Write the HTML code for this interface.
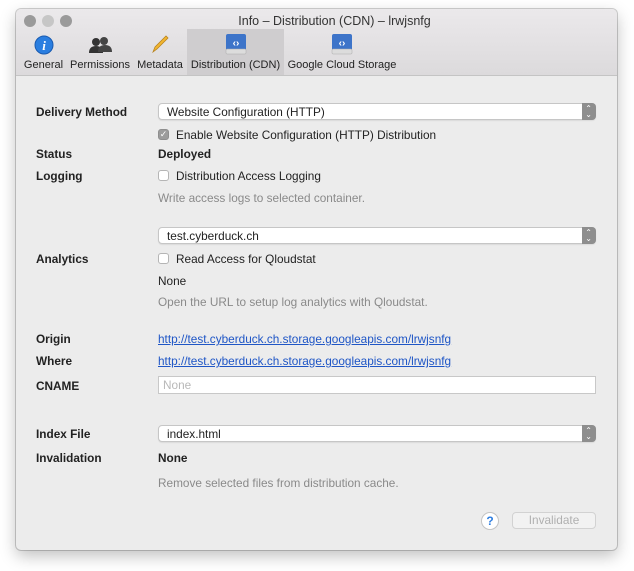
<!DOCTYPE html>
<html><head><style>
body{margin:0;width:634px;height:571px;background:#fff;font-family:"Liberation Sans",sans-serif;font-size:11.8px;color:#222;position:relative;overflow:hidden}
.win{position:absolute;left:16px;top:9px;width:601px;height:541px;background:#ececec;border-radius:5px;box-shadow:0 0 0 1px rgba(0,0,0,.18),0 6px 16px rgba(0,0,0,.25);overflow:hidden}
.bar{position:absolute;left:0;top:0;width:601px;height:66px;background:linear-gradient(#ebe9eb,#dcdadc);border-bottom:1px solid #c4c4c4}
.dot{position:absolute;top:6px;width:12px;height:12px;border-radius:50%;background:#9a9a9a}
.title{position:absolute;top:5px;left:0;width:601px;text-align:center;font-size:12.5px;color:#333;padding-left:36px;box-sizing:border-box}
.tab{position:absolute;top:20px;height:46px;text-align:center;font-size:11px;color:#222}
.tab .lab{position:absolute;bottom:4px;left:0;right:0;white-space:nowrap}
.sel{background:#cfcdcf}
.a{position:absolute;white-space:nowrap}
.b{font-weight:bold}
.pop{position:absolute;left:142px;width:438px;height:17px;background:#fff;border:1px solid #c6c6c6;border-radius:4px;box-sizing:border-box;padding-left:8px;line-height:16px;box-shadow:0 1px 1px rgba(0,0,0,.08)}
.pop:after{content:"";position:absolute;right:-1px;top:-1px;width:14px;height:17px;background:#8e8e8e;border-radius:0 4px 4px 0}
.pop i{position:absolute;right:3px;top:2px;color:#fff;font-style:normal;font-size:8px;line-height:6px;z-index:2;text-align:center}
.cb{position:absolute;width:11px;height:11px;border:1px solid #b5b5b5;border-radius:3px;background:#fff;box-sizing:border-box}
.g{color:#8a8a8a}
a{color:#1f56c6;text-decoration:underline}
</style></head><body>
<div class="win">
<div class="bar">
<div class="dot" style="left:8px"></div><div class="dot" style="left:26px;background:#c6c6c6"></div><div class="dot" style="left:44px"></div>
<div class="title">Info – Distribution (CDN) – lrwjsnfg</div>
<div class="tab" style="left:6px;width:43px"><svg class="a" style="left:12px;top:6px" width="20" height="20"><circle cx="10" cy="10" r="9" fill="#2a7ee0" stroke="#1a5bb0"/><text x="10" y="15" font-family="Liberation Serif" font-style="italic" font-weight="bold" font-size="13" fill="#fff" text-anchor="middle">i</text></svg><div class="lab">General</div></div>
<div class="tab" style="left:53px;width:62px"><svg class="a" style="left:19px;top:7px" width="24" height="18"><circle cx="8" cy="6" r="4" fill="#333"/><path d="M1 17 q0-7 7-7 q7 0 7 7z" fill="#333"/><circle cx="16" cy="5" r="4" fill="#444"/><path d="M10 16 q0-7 7-7 q7 0 7 7z" fill="#444"/></svg><div class="lab">Permissions</div></div>
<div class="tab" style="left:120px;width:48px"><svg class="a" style="left:14px;top:5px" width="20" height="20"><path d="M3 18 L5 13 L16 2 L18 4 L7 15 Z" fill="#f2b630" stroke="#b88420" stroke-width=".8"/></svg><div class="lab">Metadata</div></div>
<div class="tab sel" style="left:171px;width:97px"><svg class="a" style="left:38px;top:4px" width="22" height="22"><rect x="1" y="1" width="20" height="17" rx="2" fill="#3d74c9"/><rect x="1" y="16" width="20" height="5" rx="1" fill="#dcdcdc" stroke="#aaa" stroke-width=".5"/><text x="11" y="13" font-size="10" fill="#fff" text-anchor="middle" font-weight="bold">‹›</text></svg><div class="lab">Distribution (CDN)</div></div>
<div class="tab" style="left:271px;width:110px"><svg class="a" style="left:44px;top:4px" width="22" height="22"><rect x="1" y="1" width="20" height="17" rx="2" fill="#3d74c9"/><rect x="1" y="16" width="20" height="5" rx="1" fill="#dcdcdc" stroke="#aaa" stroke-width=".5"/><text x="11" y="13" font-size="10" fill="#fff" text-anchor="middle" font-weight="bold">‹›</text></svg><div class="lab">Google Cloud Storage</div></div>
</div>

<div class="a b" style="left:20px;top:96px">Delivery Method</div>
<div class="pop" style="top:94px">Website Configuration (HTTP)<i>⌃<br>⌄</i></div>
<div class="cb" style="left:142px;top:120px;background:#9c9c9c;border-color:#8e8e8e;color:#fff;font-size:9px;line-height:9px;text-align:center">✓</div>
<div class="a" style="left:160px;top:119px">Enable Website Configuration (HTTP) Distribution</div>
<div class="a b" style="left:20px;top:138px">Status</div><div class="a b" style="left:142px;top:138px">Deployed</div>
<div class="a b" style="left:20px;top:160px">Logging</div>
<div class="cb" style="left:142px;top:161px"></div><div class="a" style="left:160px;top:160px">Distribution Access Logging</div>
<div class="a g" style="left:142px;top:182px">Write access logs to selected container.</div>
<div class="pop" style="top:218px">test.cyberduck.ch<i>⌃<br>⌄</i></div>
<div class="a b" style="left:20px;top:243px">Analytics</div>
<div class="cb" style="left:142px;top:244px"></div><div class="a" style="left:160px;top:243px">Read Access for Qloudstat</div>
<div class="a" style="left:142px;top:265px">None</div>
<div class="a g" style="left:142px;top:286px">Open the URL to setup log analytics with Qloudstat.</div>
<div class="a b" style="left:20px;top:323px">Origin</div><div class="a" style="left:142px;top:323px"><a>http://test.cyberduck.ch.storage.googleapis.com/lrwjsnfg</a></div>
<div class="a b" style="left:20px;top:345px">Where</div><div class="a" style="left:142px;top:345px"><a>http://test.cyberduck.ch.storage.googleapis.com/lrwjsnfg</a></div>
<div class="a b" style="left:20px;top:370px">CNAME</div>
<div class="a" style="left:142px;top:367px;width:438px;height:18px;background:#fff;border:1px solid #c8c8c8;box-sizing:border-box;padding-left:4px;line-height:16px;color:#b8b8b8">None</div>
<div class="a b" style="left:20px;top:418px">Index File</div>
<div class="pop" style="top:416px">index.html<i>⌃<br>⌄</i></div>
<div class="a b" style="left:20px;top:442px">Invalidation</div><div class="a b" style="left:142px;top:442px">None</div>
<div class="a g" style="left:142px;top:467px">Remove selected files from distribution cache.</div>
<div class="a" style="left:465px;top:503px;width:16px;height:16px;border-radius:50%;background:#fff;border:1px solid #c4c4c4;text-align:center;line-height:16px;color:#2d7de0;font-weight:bold;font-size:12px">?</div>
<div class="a" style="left:496px;top:503px;width:84px;height:17px;border:1px solid #d2d2d2;border-radius:4px;background:#f2f2f2;box-sizing:border-box;text-align:center;line-height:15px;color:#b0b0b0">Invalidate</div>
</div>
</body></html>
